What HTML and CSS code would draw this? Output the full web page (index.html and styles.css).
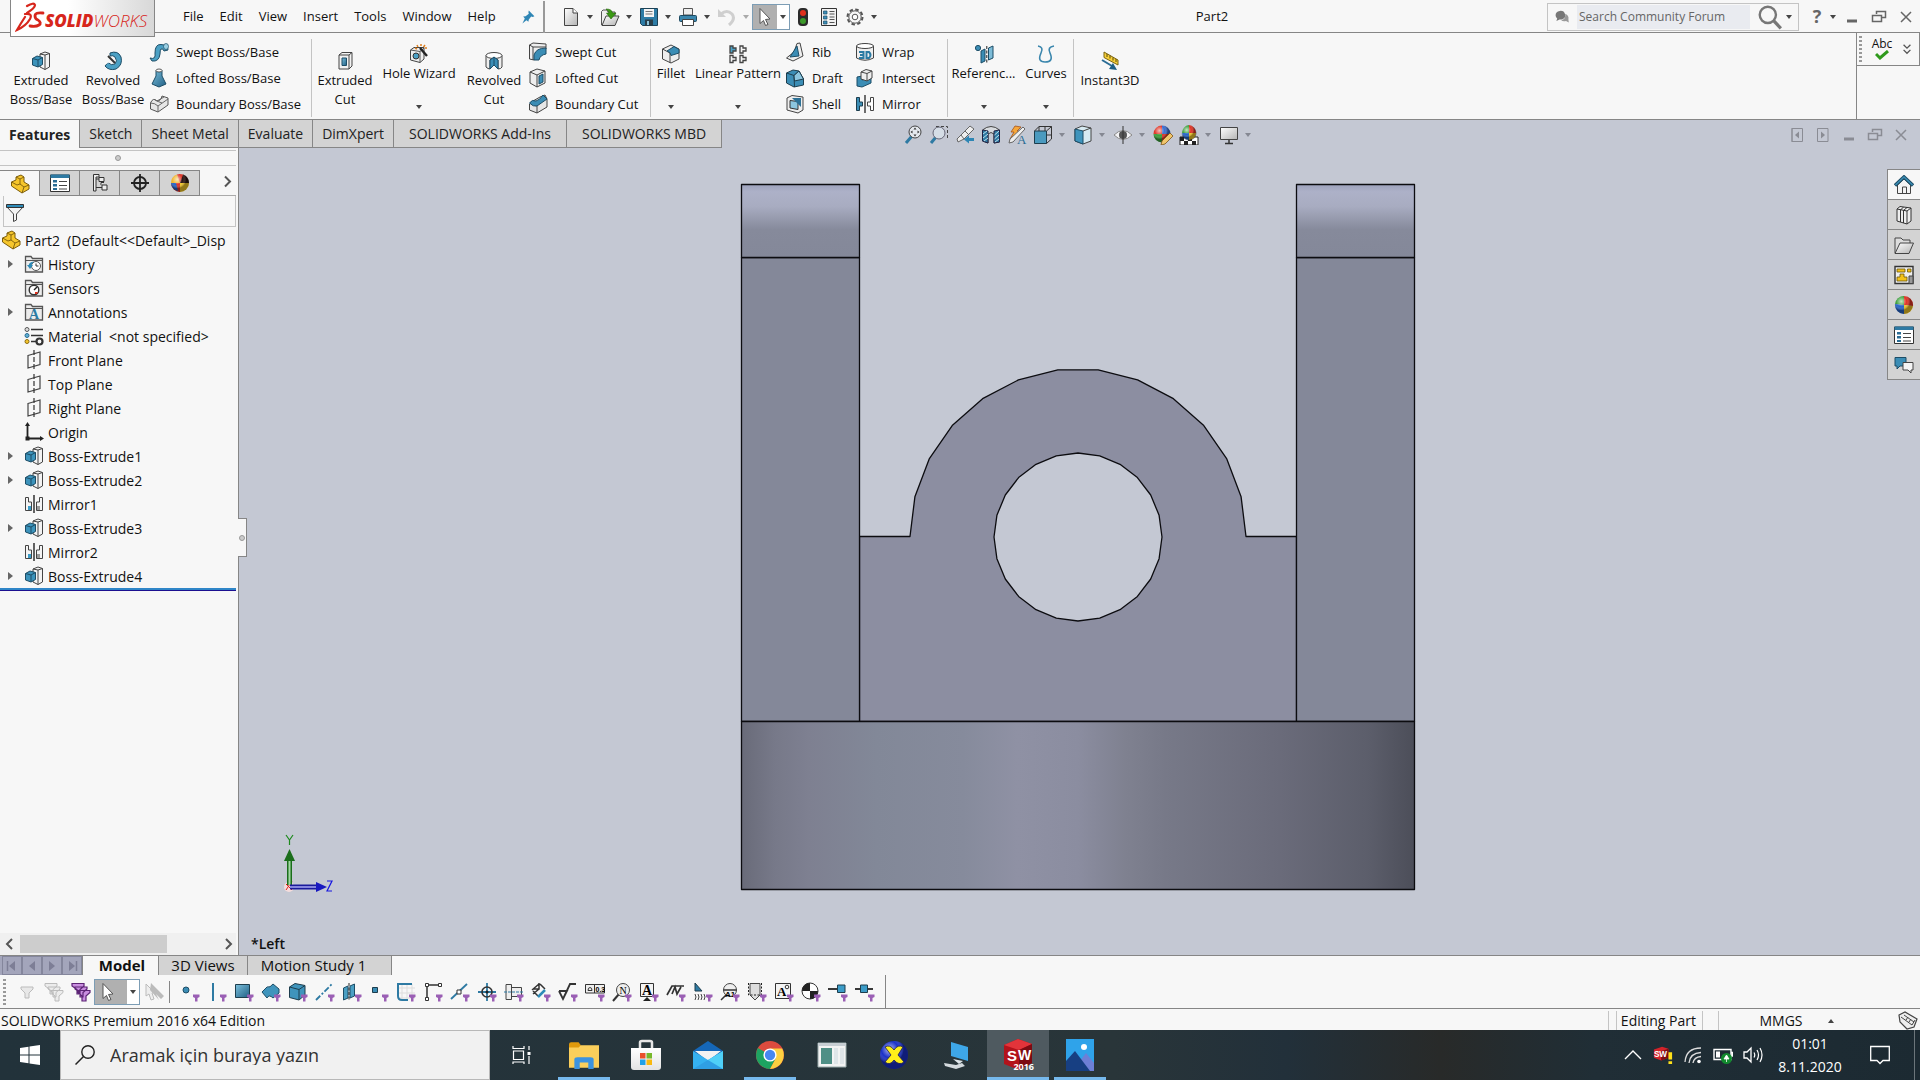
FILE: index.html
```html
<!DOCTYPE html>
<html lang="en">
<head>
  <meta charset="UTF-8">
  <meta name="viewport" content="width=device-width, initial-scale=1.0">
  <title>Part2 - SOLIDWORKS Premium 2016</title>
  <link rel="stylesheet" href="styles.css">
</head>
<body>

  <!-- shared gradients -->
  <svg class="gradients" aria-hidden="true">
    <defs>
      <linearGradient id="gBlue" x1="0" y1="0" x2="1" y2="1"><stop offset="0" stop-color="#7cc0dc"/><stop offset="1" stop-color="#1f5f85"/></linearGradient>
      <linearGradient id="gGrey" x1="0" y1="0" x2="1" y2="1"><stop offset="0" stop-color="#ffffff"/><stop offset="1" stop-color="#b4b4b4"/></linearGradient>
      <linearGradient id="gBase"><stop offset="0" stop-color="#696b79"/><stop offset=".05" stop-color="#777989"/><stop offset=".1" stop-color="#7e8091"/><stop offset=".2" stop-color="#828898"/><stop offset=".33" stop-color="#868b9c"/><stop offset=".41" stop-color="#8f91a4"/><stop offset=".5" stop-color="#8b8da0"/><stop offset=".57" stop-color="#7f8190"/><stop offset=".63" stop-color="#777988"/><stop offset=".8" stop-color="#6a6b7a"/><stop offset=".93" stop-color="#5c5e6b"/><stop offset="1" stop-color="#4c4e59"/></linearGradient>
      <linearGradient id="gRound" x1="0" y1="0" x2="0" y2="1"><stop offset="0" stop-color="#9da2bc"/><stop offset=".1" stop-color="#adb1c8"/><stop offset=".3" stop-color="#a8acc1"/><stop offset=".62" stop-color="#868a9b"/><stop offset="1" stop-color="#848899"/></linearGradient>
      <linearGradient id="gStore" x1="0" y1="0" x2="0" y2="1"><stop offset="0" stop-color="#ffffff"/><stop offset="1" stop-color="#e3e3e3"/></linearGradient>
      <radialGradient id="gBall" cx=".35" cy=".3"><stop offset="0" stop-color="#fff" stop-opacity=".7"/><stop offset=".6" stop-color="#fff" stop-opacity="0"/><stop offset="1" stop-color="#000" stop-opacity=".4"/></radialGradient>
    </defs>
  </svg>

  <!-- icon sprite -->
  <svg class="sprite" aria-hidden="true">
    <symbol id="i-ds" viewBox="0 0 30 34">
      <g fill="none" stroke="#d7261c" stroke-width="2.2" stroke-linecap="round">
        <path d="M12 5Q19 1 20 4Q20 7 12 12M10 13Q18 12 15 18Q11 25 2 29Q6 22 10 16"/>
        <path d="M28 12Q20 11 20 15Q20 18 23 19Q27 22 24 24Q21 26 15 25" stroke-width="2.8"/>
      </g>
    </symbol>
    <symbol id="i-pin" viewBox="0 0 20 20"><path d="M11 2L18 9L16 10L14 9.500L11 13L10.500 16L8 14L3 18L6 12L4 9.500L7 9L11 6L10.500 4Z" fill="#2f86b5"/></symbol>

    <!-- quick access -->
    <symbol id="i-new" viewBox="0 0 20 20"><path d="M3.500 1.500H12L16.500 6V18.500H3.500Z" fill="url(#gGrey)" stroke="#444"/><path d="M12 1.500V6H16.500" fill="#fff" stroke="#444"/></symbol>
    <symbol id="i-open" viewBox="0 0 20 20"><path d="M1.500 18V4.500L3 3H7L8 5H15V9" fill="#eee" stroke="#555"/><path d="M2 18.500L6 9H19L15 18.500Z" fill="url(#gGrey)" stroke="#444"/><path d="M6 2Q12 2 12.500 6H16L11 12L6.500 6H9Q9 4 6 2Z" fill="#3b9a14" stroke="#226608" stroke-width=".6"/></symbol>
    <symbol id="i-save" viewBox="0 0 20 20"><path d="M1.500 1.500H18.500V18.500H3.500L1.500 16.500Z" fill="#2d7ca6" stroke="#1c4257"/><path d="M5 2H15V10H5Z" fill="#f4f4f4"/><path d="M6.500 4.500H13.500M6.500 7H13.500" stroke="#777"/><path d="M6 12.500H14V18.500H6Z" fill="#2a3e49"/><path d="M8 14H10V18H8Z" fill="#8fc5dd"/></symbol>
    <symbol id="i-print" viewBox="0 0 20 20"><path d="M5.500 1.500H14.500V8H5.500Z" fill="#eee" stroke="#555"/><rect x="1.500" y="8.500" width="17" height="6" rx="1" fill="#3a86ad" stroke="#1f4a61"/><path d="M4.500 12.500H15.500V18.500H4.500Z" fill="#fff" stroke="#444"/></symbol>
    <symbol id="i-undo" viewBox="0 0 20 20"><path d="M1 2V10H9Z" fill="#cfcfcf"/><path d="M4 7Q10 2 15 7Q19 12 12 18" fill="none" stroke="#cfcfcf" stroke-width="3"/></symbol>
    <symbol id="i-cursor" viewBox="0 0 20 20"><path d="M5 1.500L15 12L10.500 12.500L13 17.500L10.500 18.500L8.500 13.500L5 16.500Z" fill="#fff" stroke="#555"/></symbol>
    <symbol id="i-light" viewBox="0 0 20 20"><rect x="5" y="1" width="10" height="18" rx="4" fill="#2b2b2b"/><circle cx="10" cy="6" r="3" fill="#e0301c"/><circle cx="10" cy="14" r="3" fill="#3c9a2a"/></symbol>
    <symbol id="i-options" viewBox="0 0 20 20"><path d="M2.500 1.500H17.500V18.500H2.500Z" fill="#f2f2f2" stroke="#333"/><path d="M4.500 4H8V7H4.500ZM4.500 9H8V12H4.500ZM4.500 14H8V17H4.500Z" fill="#3d8fb9" stroke="#1c4d68" stroke-width=".7"/><path d="M10.500 4.500H15.500M10.500 7H15.500M10.500 10H15.500M10.500 12.500H15.500M10.500 15.500H15.500" stroke="#555"/></symbol>
    <symbol id="i-gear" viewBox="0 0 20 20"><circle cx="10" cy="10" r="7.500" fill="none" stroke="#555" stroke-width="2" stroke-dasharray="3.500 2.390"/><circle cx="10" cy="10" r="6.200" fill="#f7f7f7" stroke="#555"/><circle cx="10" cy="10" r="2.800" fill="#fff" stroke="#555"/></symbol>
    <symbol id="i-chat" viewBox="0 0 20 20"><path d="M2 8a6 5.500 0 1 1 8 5L7 13L3 15L4 12Q2 10 2 8Z" fill="#777"/><path d="M14 6Q19 8 18 13L18.500 17L15 15Q11 16 9 14Q15 13 14 6Z" fill="#999"/></symbol>
    <symbol id="i-mag" viewBox="0 0 24 24"><circle cx="10" cy="10" r="7.500" fill="none" stroke="#777" stroke-width="2.200"/><path d="M15.500 15.500L22 22.500" stroke="#777" stroke-width="3"/></symbol>
    <symbol id="i-min" viewBox="0 0 16 16"><path d="M3 12H13" stroke="currentColor" stroke-width="3"/></symbol>
    <symbol id="i-restore" viewBox="0 0 16 16"><path d="M5.500 5V2.500H14.500V8.500H11M1.500 6.500H10.500V12.500H1.500Z" fill="none" stroke="currentColor" stroke-width="1.500"/></symbol>
    <symbol id="i-close" viewBox="0 0 16 16"><path d="M3 3L13 13M13 3L3 13" stroke="currentColor" stroke-width="1.500"/></symbol>
    <symbol id="i-paneL" viewBox="0 0 16 16"><path d="M3 1.500H13.500V14.500H3ZM3 1V15" fill="none" stroke="#8a8c94"/><path d="M10 4.500V11.500L6 8Z" fill="#8a8c94"/></symbol>
    <symbol id="i-paneR" viewBox="0 0 16 16"><path d="M2.500 1.500H13V14.500H2.500Z" fill="none" stroke="#8a8c94"/><path d="M6 4.500V11.500L10 8Z" fill="#8a8c94"/></symbol>

    <!-- features ribbon -->
    <symbol id="i-extrude" viewBox="0 0 20 20"><path d="M9 3L14 1L18.500 2.500V16L14 18.500L9 16Z" fill="#f3f3f3" stroke="#444"/><path d="M14 4L18.500 2.500M14 4V18.500M9 3L14 4" fill="none" stroke="#444"/><path d="M1.500 7.500L6 5L11.500 6.500V13.500L7 16L1.500 14Z" fill="#3c93bb" stroke="#1d4d66"/><path d="M1.500 7.500L7 9L11.500 6.500M7 9V16" fill="none" stroke="#1d4d66"/></symbol>
    <symbol id="i-revolve" viewBox="0 0 20 20"><path d="M7 2Q15 -1 18 6Q20 14 13 18Q6 20 2 15L5 11.500Q8 15 12 13Q15 10 12 6Q10 4 7 5Z" fill="#4ba0c4" stroke="#1d4d66"/><path d="M5 5L12 12" stroke="#333" stroke-width="2"/><path d="M2 13L6 11" stroke="#fff"/></symbol>
    <symbol id="i-sweep" viewBox="0 0 20 20"><path d="M1 16Q7 18 6 11Q6 2 12 2.500Q19 3 19 8L15 9Q14 6 12 7Q11 8 11 12Q10 20 3 19Z" fill="#4ba0c4" stroke="#1d4d66"/><ellipse cx="17" cy="4.500" rx="2.500" ry="3" fill="#9bd0e4" stroke="#1d4d66" stroke-width=".7"/></symbol>
    <symbol id="i-loft" viewBox="0 0 20 20"><path d="M7 2.500H13V8L17 16L10 19L3 16L7 8Z" fill="url(#gBlue)" stroke="#1d4d66"/><ellipse cx="10" cy="2.500" rx="3" ry="1.500" fill="#fff" stroke="#333" stroke-width=".8"/></symbol>
    <symbol id="i-boundary" viewBox="0 0 20 20"><path d="M1.500 9Q4 3 8 7Q12 7 13 2L19 4V11L9 18L1.500 15Z" fill="#e6e6e6" stroke="#555"/><path d="M1.500 9Q6 9 9 12L19 5M9 12V18M6 6Q10 8 13 9M8 7L15 3" fill="none" stroke="#666"/></symbol>
    <symbol id="i-excut" viewBox="0 0 20 20"><path d="M4 4L7 1.500H17V15L14 18H4Z" fill="#f2f2f2" stroke="#444"/><path d="M4 4H14V18M14 4L17 1.500" fill="none" stroke="#444"/><path d="M7 7H11.500V14.500H7Z" fill="url(#gBlue)" stroke="#1d4d66"/></symbol>
    <symbol id="i-hole" viewBox="0 0 20 20"><path d="M1.500 6L5 3.500H15V15L11 18.500L1.500 16Z" fill="#eee" stroke="#444"/><path d="M1.500 6L11 7.500L15 4M11 7.500V18.500" fill="none" stroke="#555"/><circle cx="7" cy="12" r="3" fill="#4ba0c4" stroke="#333"/><path d="M11 4L18 12" stroke="#222" stroke-width="2.400"/><path d="M8 1L9 3M12 0V2M16 1L14.500 3M18 4H16M6 4L8 5" stroke="#e08020" stroke-width="1.500"/></symbol>
    <symbol id="i-revcut" viewBox="0 0 20 20"><path d="M2 4.500V16Q4 18 6 18V9L10 7L14 9V18Q17 18 18 16V4.500" fill="#eee" stroke="#444"/><ellipse cx="10" cy="4.500" rx="8" ry="3" fill="#fff" stroke="#444"/><path d="M6 18V9L10 6L14 9V18L10 14Z" fill="#3b8db5" stroke="#1d4d66"/><path d="M10 6V14" stroke="#1d4d66"/></symbol>
    <symbol id="i-sweptcut" viewBox="0 0 20 20"><path d="M1.500 3L5 1L18 2V7L6 18L1.500 17Z" fill="#eee" stroke="#444"/><path d="M5 5L1.500 3M5 5L18 5M5 5V18" stroke="#444"/><path d="M6 18V13Q8 6 18 6V12Q12 13 11 18Z" fill="#3b8db5" stroke="#1d4d66"/></symbol>
    <symbol id="i-loftcut" viewBox="0 0 20 20"><path d="M2 4L9 1L17 3V15L9 19L2 15Z" fill="#eee" stroke="#444"/><path d="M2 4L9 7L17 3M9 7V19" fill="none" stroke="#444"/><path d="M11 8L15 6V14L11 16Z" fill="#3b8db5" stroke="#1d4d66"/></symbol>
    <symbol id="i-boundcut" viewBox="0 0 20 20"><path d="M1.500 10L5 7L12 3L17 1L19 5V13L9 19L1.500 16Z" fill="#e6e6e6" stroke="#444"/><path d="M1.500 9Q4 5 8 7Q12 6 15 1L19 5L9 12Q5 13 1.500 9Z" fill="#3b8db5" stroke="#1d4d66"/><path d="M9 12V19" stroke="#444"/></symbol>
    <symbol id="i-fillet" viewBox="0 0 20 20"><path d="M1.500 5L10 1L18 5V15L10 19L1.500 15Z" fill="#eee" stroke="#444"/><path d="M1.500 5L9 9V19" fill="none" stroke="#444"/><path d="M6 7L13 2.500L18 5.500V9L10 11.500Q10 8 6 7Z" fill="#3b8db5" stroke="#1d4d66"/></symbol>
    <symbol id="i-linear" viewBox="0 0 20 20"><g fill="none" stroke="#444" stroke-width="1.300"><path d="M2 2H5V4H8V7H5V9H2Z" fill="#4ba0c4"/><path d="M12 2H15V4H18V7H15V9H12Z"/><path d="M2 11.500H5V13.500H8V16.500H5V18.500H2Z"/><path d="M12 11.500H15V13.500H18V16.500H15V18.500H12Z"/></g></symbol>
    <symbol id="i-rib" viewBox="0 0 20 20"><path d="M12 1.500L15 1L18 14L8 19L1.500 16L9 10Z" fill="#eee" stroke="#444"/><path d="M12 4L14 14L5 15Z" fill="#3b8db5" stroke="#1d4d66"/></symbol>
    <symbol id="i-draft" viewBox="0 0 20 20"><path d="M1.500 5L8 2L14 3L18.500 11V17L9 19L1.500 15Z" fill="#3b8db5" stroke="#1d3d4d"/><path d="M1.500 5L9 7.500L14 3M9 7.500L9.500 19" fill="none" stroke="#1d3d4d"/><path d="M9 7.500L14 3L18.500 11L9.500 13Z" fill="#8cc6df" stroke="#1d3d4d"/></symbol>
    <symbol id="i-shell" viewBox="0 0 20 20"><path d="M2 4L7 1.500L18 3V16L13 19L2 16Z" fill="#eee" stroke="#444"/><path d="M5 6.500L13 7.500V15.500L5 14Z" fill="#8cc6df" stroke="#333"/><path d="M7 4H16V13L11 8Z" fill="#2c7196"/></symbol>
    <symbol id="i-wrap" viewBox="0 0 20 20"><path d="M1.500 4V16Q10 20.500 18.500 16V4" fill="#eee" stroke="#444"/><ellipse cx="10" cy="4" rx="8.500" ry="2.500" fill="#fff" stroke="#444"/><path d="M4 10H8.500V16H4M5 13H8M11.500 10H14Q17 13 14 16H11.500Z" fill="none" stroke="#2a7aa3" stroke-width="2"/></symbol>
    <symbol id="i-intersect" viewBox="0 0 20 20"><path d="M2 9L7 8V12L16 9V15L7 19L2 18Z" fill="#3b8db5" stroke="#1d4d66"/><path d="M6 4L11 1.500L17 3V10L12 13L6 11Z" fill="#eee" stroke="#444"/><path d="M6 4L12 5.500L17 3M12 5.500V13" fill="none" stroke="#444"/></symbol>
    <symbol id="i-mirror" viewBox="0 0 20 20"><path d="M1.500 3.500H4.500V8H7.500V12H4.500V16.500H1.500Z" fill="#3b8db5" stroke="#1d3d4d"/><path d="M10 1V19" stroke="#222" stroke-width="1.300"/><path d="M18.500 3.500H15.500V8H12.500V12H15.500V16.500H18.500Z" fill="#fff" stroke="#444"/></symbol>
    <symbol id="i-refgeo" viewBox="0 0 20 20"><circle cx="4" cy="4" r="2.600" fill="#3b8db5" stroke="#1d4d66"/><path d="M7 7L11 5V17L7 19Z" fill="#3b8db5" stroke="#1d4d66"/><path d="M14.500 4L19 2V14L14.500 16Z" fill="#7dbcd8" stroke="#1d4d66"/><path d="M12.800 2V19" stroke="#222" stroke-dasharray="3 1.500"/></symbol>
    <symbol id="i-curves" viewBox="0 0 20 20"><path d="M2 2Q8 3 5 9Q1 18 9 18Q18 18 14 9Q11 3 18 2" fill="none" stroke="#3a86ad" stroke-width="1.600"/></symbol>
    <symbol id="i-instant" viewBox="0 0 20 20"><path d="M4 1L18 9V14L4 6.500Z" fill="#f7d038" stroke="#7a6412"/><path d="M7 3V6M10 4.500V7.500M13 6.500V9.500M16 8V11" stroke="#5a4808"/><path d="M2 9L12 15" stroke="#2a6c94" stroke-width="2"/><path d="M17 19L9 18L13 12Z" fill="#1f5f85"/></symbol>

    <!-- view toolbar -->
    <symbol id="i-zoomfit" viewBox="0 0 20 20"><path d="M9 11L3 18" stroke="#2e7aa3" stroke-width="3"/><circle cx="12" cy="7" r="6" fill="#e4e8ee" stroke="#444"/><path d="M12 2.500L13.500 4.500H10.500ZM12 11.500L13.500 9.500H10.500ZM7.500 7L9.500 5.500V8.500ZM16.500 7L14.500 5.500V8.500Z" fill="#333"/></symbol>
    <symbol id="i-zoomarea" viewBox="0 0 20 20"><path d="M7 1.500H18.500V13" fill="none" stroke="#444" stroke-dasharray="3 2"/><path d="M7 12L2 18" stroke="#2e7aa3" stroke-width="3"/><circle cx="10" cy="8" r="6" fill="#d5dde6" stroke="#667"/></symbol>
    <symbol id="i-prev" viewBox="0 0 20 20"><path d="M15 1L19 4L9 14L3 17L2 14L8 8Z" fill="#eee" stroke="#666"/><path d="M10 6L14 10M6 10L9 14" stroke="#666"/><path d="M19 13V16H14V18.500L9 14.500L14 10.500V13Z" fill="#2e86b4"/></symbol>
    <symbol id="i-section" viewBox="0 0 20 20"><path d="M1.500 5Q10 -2 18.500 5V17L13 18V9Q10 6 7 9V18L1.500 16Z" fill="#d7dade" stroke="#444"/><path d="M1.500 5L7 6V18L1.500 16ZM13 6L18.500 5V17L13 18Z" fill="#2e7aa3" stroke="#224"/><path d="M2 9L6 6M2 13L7 9M3 16L7 13M13.500 10L18 6M13.500 14L18 10M14 17L18 14" stroke="#bfe0ee"/></symbol>
    <symbol id="i-dynann" viewBox="0 0 20 20"><path d="M8 1L14 2L10 6H14L3 14L7 7H4Z" fill="#f6a73a" stroke="#a5521a" stroke-width=".8"/><path d="M16 2L18 4L6 17L2 18L3 14Z" fill="#eee" stroke="#666"/><text x="10" y="19" font-family="Liberation Serif" font-size="13" fill="#2a6c94">A</text></symbol>
    <symbol id="i-orient" viewBox="0 0 20 20"><path d="M1.500 6H13.500V18.500H1.500Z" fill="#4a9abf" stroke="#1d3d4d"/><path d="M1.500 6L6 1.500H18.500V14L13.500 18.500M13.500 6L18.500 1.500M6 1.500V6M12 1.500V6M13.500 10H18.500" fill="none" stroke="#333"/></symbol>
    <symbol id="i-style" viewBox="0 0 20 20"><path d="M2 4L9 1L18 3V16L10 19L2 16Z" fill="#d6eaf2" stroke="#444"/><path d="M2 4L10 6V19L2 16Z" fill="#3f94bc" stroke="#1d4d66"/><path d="M10 6L18 3" stroke="#444"/></symbol>
    <symbol id="i-eye" viewBox="0 0 20 20"><path d="M1 10Q10 1 19 10Q10 19 1 10Z" fill="#f2f2f4" stroke="#888"/><circle cx="10" cy="10" r="4" fill="#555"/><path d="M10 1V19" stroke="#333"/></symbol>
    <symbol id="i-ball" viewBox="0 0 20 20"><path d="M10 10V1A9 9 0 0 0 1 9Z" fill="#3ba03a"/><path d="M10 10V1A9 9 0 0 1 19 11Z" fill="#e03426"/><path d="M10 10L1 9A9 9 0 0 0 10 19Z" fill="#2765c8"/><path d="M10 10L19 11A9 9 0 0 1 10 19Z" fill="#f0c528"/><circle cx="10" cy="10" r="9" fill="url(#gBall)"/></symbol>
    <symbol id="i-appear" viewBox="0 0 20 20"><path d="M9 9V.5A8.500 8.500 0 0 0 .5 9Z" fill="#e03426"/><path d="M9 9V.5A8.500 8.500 0 0 1 17.500 9Z" fill="#3d6fd0"/><path d="M9 9H.5A8.500 8.500 0 0 0 9 17.500Z" fill="#3ba03a"/><path d="M9 9H17.500A8.500 8.500 0 0 1 9 17.500Z" fill="#e03426"/><circle cx="9" cy="9" r="8.500" fill="url(#gBall)"/><path d="M17 8L20 11L12 19L8 20L9 16Z" fill="#f1c66c" stroke="#7a5317" stroke-width=".8"/></symbol>
    <symbol id="i-scene" viewBox="0 0 20 20"><path d="M1 12H19V20H1Z" fill="#fff" stroke="#222"/><path d="M1 12H5V16H1ZM9 12H13V16H9ZM5 16H9V20H5ZM13 16H17V20H13Z" fill="#222"/><path d="M10 8V0A8 8 0 0 0 3 8Z" fill="#3ba03a"/><path d="M10 8V0A8 8 0 0 1 17 8Z" fill="#e03426"/><path d="M3 8H10V15A8 8 0 0 1 3 8Z" fill="#2765c8"/><path d="M10 8H17A8 8 0 0 1 10 15Z" fill="#f0c528"/><circle cx="10" cy="8" r="7.500" fill="url(#gBall)"/></symbol>
    <symbol id="i-monitor" viewBox="0 0 20 20"><path d="M1.500 2.500H18.500V14.500H1.500Z" fill="url(#gGrey)" stroke="#444"/><path d="M10 15V18M6 18.500H14" stroke="#333" stroke-width="1.500"/></symbol>

    <!-- feature tree -->
    <symbol id="i-part" viewBox="0 0 20 20"><path d="M6 3L11 1L14 3V8L19 11V15L12 19L1.500 12V8L6 6Z" fill="#f6c62c" stroke="#7b5c0b"/><path d="M6 3L10 5V10L14 13L19 11M10 5L14 3M14 13L12 19M1.500 8L7 11L10 10" fill="none" stroke="#7b5c0b" stroke-width=".9"/></symbol>
    <symbol id="i-props" viewBox="0 0 20 20"><path d="M.5 2H19.500V18.500H.5Z" fill="#fff" stroke="#333"/><path d="M.5 1.500H19.500V5H.5Z" fill="#2e7aa3"/><path d="M3 7H7V9.500H3ZM3 11H7V13.500H3ZM3 15H7V17H3Z" fill="#2a6c94"/><path d="M9 8.500H17M9 12.500H17M9 16H17" stroke="#444"/></symbol>
    <symbol id="i-config" viewBox="0 0 20 20"><path d="M3.500 1.500H9V4H6V18H3.500Z" fill="#eee" stroke="#333"/><path d="M9 4.500H14V8.500H9ZM12 12H17V17H12ZM6 6H9M6 14.500H12M14 9.500H11V12" fill="#eee" stroke="#333"/></symbol>
    <symbol id="i-target" viewBox="0 0 20 20"><circle cx="10" cy="10" r="6" fill="none" stroke="#222" stroke-width="1.800"/><path d="M10 1V19M1 10H19" stroke="#222" stroke-width="1.800"/></symbol>
    <symbol id="i-display" viewBox="0 0 20 20"><path d="M10 10L7 1.500A9 9 0 0 0 1 10Z" fill="#f0b428"/><path d="M10 10L7 1.500A9 9 0 0 1 14 2Z" fill="#e03426"/><path d="M10 10L13 1.500A9 9 0 0 1 19 10Z" fill="#2b1512"/><path d="M10 10H1A9 9 0 0 0 10 19Z" fill="#e03426"/><path d="M1 10H6L8 18A9 9 0 0 1 1 10Z" fill="#2765c8"/><path d="M10 10H19A9 9 0 0 1 10 19Z" fill="#f0c528"/><circle cx="10" cy="10" r="9" fill="url(#gBall)"/></symbol>
    <symbol id="i-funnel" viewBox="0 0 20 20"><path d="M1.500 3.500H18.500L11.500 11V17L8.500 18.500V11Z" fill="#f4f4f4" stroke="#444"/><path d="M1.500 1.500H18.500V4.500H1.500Z" fill="#2e8bb8" stroke="#333"/></symbol>
    <symbol id="i-folder" viewBox="0 0 20 20"><path d="M1.500 18V2.500H7L8.500 4.500H18.500V18Z" fill="#ececec" stroke="#555" stroke-width="1.300"/><path d="M1.500 6.500H18" stroke="#555"/></symbol>
    <symbol id="i-history" viewBox="0 0 20 20"><use href="#i-folder"/><circle cx="12" cy="12" r="4.500" fill="#fff" stroke="#555"/><path d="M12 9.500V12H14.500" fill="none" stroke="#333"/><path d="M3 11L6 15L9 11H7.500Q8 9 10 7.500Q5 8 4.800 11Z" fill="#2e8bb8"/></symbol>
    <symbol id="i-sensor" viewBox="0 0 20 20"><use href="#i-folder"/><circle cx="10" cy="12" r="4.800" fill="#fff" stroke="#333" stroke-width="1.400"/><path d="M10 12L13 9" stroke="#222" stroke-width="1.500"/><path d="M11 14H14L13 16H11Z" fill="#e0301c"/></symbol>
    <symbol id="i-annot" viewBox="0 0 20 20"><use href="#i-folder"/><text x="10" y="17" text-anchor="middle" font-family="Liberation Serif" font-weight="bold" font-size="14" fill="#2a7aa3">A</text></symbol>
    <symbol id="i-material" viewBox="0 0 20 20"><path d="M7 3.500H19M7 9.500H19M7 15.500H12" stroke="#333" stroke-width="1.600"/><circle cx="3" cy="3.500" r="2" fill="#ddd" stroke="#555"/><circle cx="3" cy="9.500" r="2" fill="#5fb0d4" stroke="#2a6c94"/><circle cx="3" cy="15.500" r="2" fill="#f6c62c" stroke="#8d6d12"/><circle cx="15.500" cy="15.500" r="3" fill="none" stroke="#333" stroke-width="2.200"/></symbol>
    <symbol id="i-plane" viewBox="0 0 20 20"><path d="M4 5.500L16 2V14.500L4 18Z" fill="none" stroke="#444" stroke-width="1.200"/><path d="M10 0V20" stroke="#333" stroke-width="1.200" stroke-dasharray="5 2"/></symbol>
    <symbol id="i-origin" viewBox="0 0 20 20"><path d="M3.500 3V16.500H17" fill="none" stroke="#222" stroke-width="1.800"/><path d="M3.500 0L6 4H1ZM20 16.500L16 14V19ZM1.500 14.500H5.500V18.500H1.500Z" fill="#222"/></symbol>
    <symbol id="i-mirrorf" viewBox="0 0 20 20"><path d="M1.500 3.500H4.500V8H7.500V16.500H1.500Z" fill="#f4f4f4" stroke="#444"/><path d="M4 12H7V16H4Z" fill="#3b9cc8"/><path d="M10 1V19" stroke="#222" stroke-width="1.400"/><path d="M18.500 3.500H15.500V8H12.500V16.500H18.500Z" fill="#f4f4f4" stroke="#444"/><path d="M13 12H16V16H13Z" fill="#999"/></symbol>

    <!-- task pane -->
    <symbol id="i-home" viewBox="0 0 20 20"><path d="M3.500 10V18.500H16.500V10L10 4Z" fill="#f4f4f4" stroke="#444"/><path d="M8.500 18V12H12.500V18" fill="none" stroke="#444"/><path d="M1 10.500L10 2L19 10.500" fill="none" stroke="#1d4d66" stroke-width="3.500"/><path d="M1.500 10L10 2L18.500 10" fill="none" stroke="#3b8db5" stroke-width="1.500"/></symbol>
    <symbol id="i-library" viewBox="0 0 20 20"><path d="M3 4L6 1.500L17 3V16L13 19L3 16Z" fill="#eee" stroke="#333"/><path d="M3 4L13 6L17 3M13 6V19M6.500 5V17M9.500 5.500V18M6.500 5L9.500 2M9.500 5.500L13 2.500" fill="none" stroke="#333"/></symbol>
    <symbol id="i-explorer" viewBox="0 0 20 20"><path d="M1 18V3H7L9 5H16V8" fill="#ddd" stroke="#444"/><path d="M1 18.500L6 8H19.500L15 18.500Z" fill="url(#gGrey)" stroke="#444"/></symbol>
    <symbol id="i-palette" viewBox="0 0 20 20"><path d="M1 1.500H19V18.500H1Z" fill="#eee" stroke="#333" stroke-width="1.400"/><path d="M3 4H11V7H3ZM13.500 4H17V7H13.500ZM6 9H10V12H13V16H3V12H6Z" fill="#f3c218" stroke="#6b5508" stroke-width=".8"/><path d="M15 11H19V18.500H15Z" fill="#999" stroke="#444"/></symbol>
    <symbol id="i-forum" viewBox="0 0 20 20"><path d="M1 2.500H12V11H6L3 14V11H1Z" fill="#3b8db5" stroke="#1d4d66"/><path d="M9 7.500H19V15H17V18L14 15H9Z" fill="#f4f4f4" stroke="#444"/></symbol>

    <!-- selection filters -->
    <symbol id="i-pf" viewBox="0 0 20 20"><path d="M13 12.500H19.500V15L17.500 16V19.500H15V16L13 15Z" fill="#9a5fb4"/></symbol>
    <symbol id="i-f0" viewBox="0 0 20 20"><path d="M4 5H16V7L12 11V16H8V11L4 7Z" fill="#e8e8e8" stroke="#bbb"/></symbol>
    <symbol id="i-f1" viewBox="0 0 20 20"><path d="M1 1.500H13V4L9 7.500V12H6V7.500L1 4ZM4 5H16V7L12 10.500V15H9V10.500L4 7ZM7 8.500H19V10.500L15 14V19H11V14L7 10.500Z" fill="#ececec" stroke="#bbb"/></symbol>
    <symbol id="i-f2" viewBox="0 0 20 20"><path d="M1 1.500H13V4L9 7.500V12H6V7.500L1 4ZM4 5H16V7L12 10.500V15H9V10.500L4 7ZM7 8.500H19V10.500L15 14V19H11V14L7 10.500Z" fill="#c98ee0" stroke="#5c2475" stroke-width="1.200"/></symbol>
    <symbol id="i-f3" viewBox="0 0 20 20"><path d="M2 2L10 10L8 11L10 17L7 18L5 12L2 14Z" fill="#eee" stroke="#bbb"/><path d="M7 1L20 14L17 17L12 12L15 18L6 8Z" fill="#bbb"/></symbol>
    <symbol id="i-vertex" viewBox="0 0 20 20"><circle cx="6" cy="8" r="3" fill="#3b8db5" stroke="#1d4d66"/></symbol>
    <symbol id="i-edge" viewBox="0 0 20 20"><path d="M6 1V19" stroke="#2e7aa3" stroke-width="2"/></symbol>
    <symbol id="i-face" viewBox="0 0 20 20"><path d="M1.500 2.500H15.500V15.500H1.500Z" fill="url(#gBlue)" stroke="#1d3d4d"/></symbol>
    <symbol id="i-surf" viewBox="0 0 20 20"><path d="M1 10L6 5Q9 6 12 2L18 7V11L12 16Q8 12 6 16Z" fill="#3f94bc" stroke="#1d4d66"/></symbol>
    <symbol id="i-solid" viewBox="0 0 20 20"><path d="M1.500 5L7 1.500L17 3.500V13L11 18L1.500 15.500Z" fill="#3f94bc" stroke="#1d3d4d"/><path d="M1.500 5L11 7.500L17 3.500M11 7.500V18" fill="none" stroke="#1d3d4d"/></symbol>
    <symbol id="i-axis" viewBox="0 0 20 20"><path d="M1 18L17 2" stroke="#2e7aa3" stroke-width="1.800" stroke-dasharray="6 2 2 2"/></symbol>
    <symbol id="i-fplane" viewBox="0 0 20 20"><path d="M1.500 6L6 4V16L1.500 18ZM8 4L12.500 2V14L8 16Z" fill="#4ba0c4" stroke="#1d4d66"/><path d="M7 1V19" stroke="#222" stroke-dasharray="3 1.500"/></symbol>
    <symbol id="i-fpoint" viewBox="0 0 20 20"><path d="M3.500 5.500H8.500V10.500H3.500Z" fill="#3b8db5" stroke="#1d3d4d"/></symbol>
    <symbol id="i-fsketch" viewBox="0 0 20 20"><path d="M6 2V18M11 2V18M16 2V18M1 6H19M1 11H19M1 16H19" stroke="#ddd"/><path d="M16 2H2V14Q2 18 6 18H12" fill="none" stroke="#2e7aa3" stroke-width="2"/></symbol>
    <symbol id="i-fseg" viewBox="0 0 20 20"><path d="M4 18V3H17" fill="none" stroke="#333" stroke-width="1.500"/><path d="M2.500 1.500H5.500V4.500H2.500ZM15.500 1.500H18.500V4.500H15.500ZM2.500 15.500H5.500V18.500H2.500Z" fill="#fff" stroke="#333"/></symbol>
    <symbol id="i-fmid" viewBox="0 0 20 20"><path d="M1 17L17 2" stroke="#2e7aa3" stroke-width="1.800"/><path d="M7 8H11V12H7Z" fill="#fff" stroke="#333"/></symbol>
    <symbol id="i-fcenter" viewBox="0 0 20 20"><path d="M10 1V19M1 10H19" stroke="#2e7aa3" stroke-width="1.800"/><circle cx="10" cy="10" r="5" fill="none" stroke="#333" stroke-width="1.600"/><circle cx="10" cy="10" r="1.500" fill="#222"/></symbol>
    <symbol id="i-fcl" viewBox="0 0 20 20"><path d="M2 2.500H7.500V17.500H2ZM7.500 5.500H17.500V14.500H7.500Z" fill="#eee" stroke="#444"/><path d="M0 10H19" stroke="#2e7aa3" stroke-dasharray="3 1"/></symbol>
    <symbol id="i-fdim" viewBox="0 0 20 20"><path d="M8 1V7H2M8 7L2 12M1 8L8 2M9 2L14 7M2 9L7 14" fill="none" stroke="#333" stroke-width="1.500"/><path d="M7 15L14 8" stroke="#2e8bb8" stroke-width="2.500"/></symbol>
    <symbol id="i-fsurf" viewBox="0 0 20 20"><path d="M1 9H9L5 17L1 9M5 17L12 2H18" fill="none" stroke="#333" stroke-width="1.800"/></symbol>
    <symbol id="i-fgtol" viewBox="0 0 20 20"><path d="M.5 2.500H19.500V11H.5ZM9.500 2.500V11" fill="#eee" stroke="#333"/><path d="M3 8.500A2 3 0 0 1 7 8.500Z" fill="none" stroke="#333"/><text x="10.500" y="10" font-family="Liberation Sans" font-size="7" font-weight="bold">0.3</text></symbol>
    <symbol id="i-fnote" viewBox="0 0 20 20"><path d="M7 12L1 19" stroke="#333" stroke-width="2"/><circle cx="11" cy="8" r="6.500" fill="#eee" stroke="#444"/><text x="11" y="12" text-anchor="middle" font-family="Liberation Serif" font-size="10">N</text></symbol>
    <symbol id="i-fdatum" viewBox="0 0 20 20"><path d="M1.500 1.500H14.500V14.500H1.500Z" fill="#f4f4f4" stroke="#333"/><path d="M8 15L12 19H4Z" fill="#222"/><text x="8" y="13" text-anchor="middle" font-family="Liberation Serif" font-weight="bold" font-size="14">A</text></symbol>
    <symbol id="i-fweld" viewBox="0 0 20 20"><path d="M1 13L6 4H18M6 12L9 5L11 12L15 5" fill="none" stroke="#333" stroke-width="1.700"/></symbol>
    <symbol id="i-fcat" viewBox="0 0 20 20"><path d="M2 1L9 9H2Z" fill="#2e7aa3" stroke="#1d3d4d"/><path d="M2 12Q4 15 2 18M5 12Q7 15 5 18M8 12Q10 15 8 18M11 12Q13 15 11 18" fill="none" stroke="#444"/></symbol>
    <symbol id="i-fdt" viewBox="0 0 20 20"><circle cx="10" cy="8" r="6.500" fill="#eee" stroke="#444"/><path d="M3.500 8H16.500M6 13L1 18" stroke="#333" stroke-width="1.500"/><text x="10" y="15" text-anchor="middle" font-family="Liberation Sans" font-weight="bold" font-size="8">A1</text></symbol>
    <symbol id="i-fthread" viewBox="0 0 20 20"><path d="M3 1.500H13V13L8 18L3 13Z" fill="#ddd" stroke="#444"/><path d="M1.500 1V13H14.500V1" fill="none" stroke="#222" stroke-dasharray="2 1.500"/></symbol>
    <symbol id="i-fblock" viewBox="0 0 20 20"><path d="M1.500 1.500H16.500V16.500H1.500Z" fill="#f4f4f4" stroke="#333"/><text x="3" y="14" font-family="Liberation Serif" font-weight="bold" font-size="13">A</text><circle cx="13" cy="5" r="1.800" fill="none" stroke="#333"/></symbol>
    <symbol id="i-fcom" viewBox="0 0 20 20"><circle cx="9" cy="9" r="8" fill="#fff" stroke="#333"/><path d="M9 9V1A8 8 0 0 0 1 9ZM9 9V17A8 8 0 0 0 17 9Z" fill="#222"/></symbol>
    <symbol id="i-fconn" viewBox="0 0 20 20"><path d="M0 7H10" stroke="#222" stroke-width="1.800"/><path d="M9.500 3H17V10.500H9.500Z" fill="#3b9cc8" stroke="#1d3d4d"/></symbol>
    <symbol id="i-froute" viewBox="0 0 20 20"><path d="M0 7H18" stroke="#222" stroke-width="1.800"/><path d="M5.500 3H12.500V10.500H5.500Z" fill="#3b9cc8" stroke="#1d3d4d"/></symbol>
    <symbol id="i-tags" viewBox="0 0 20 20"><path d="M1 4L7 1L19 8L16 16L9 18L2 11Z" fill="#eee" stroke="#444" stroke-width="1.200"/><path d="M3 6L14 14L17 9M6 4L16 11M8 9L10 6M11 11L13 8" fill="none" stroke="#444"/></symbol>

    <!-- taskbar -->
    <symbol id="t-win" viewBox="0 0 20 20"><path d="M0 3L8.500 1.800V9.500H0ZM9.500 1.600L20 0V9.500H9.500ZM0 10.500H8.500V18.200L0 17ZM9.500 10.500H20V20L9.500 18.400Z" fill="#fff"/></symbol>
    <symbol id="t-search" viewBox="0 0 20 20"><circle cx="13" cy="7" r="6.200" fill="none" stroke="#222" stroke-width="1.400"/><path d="M8.500 11.500L.5 19.500" stroke="#222" stroke-width="1.500"/></symbol>
    <symbol id="t-view" viewBox="0 0 20 20"><path d="M1 1V3.500H12V1M1.500 6H11.500V14.500H1.500ZM1 19V17H12V19M17 1V5M17 11V19" fill="none" stroke="#fff" stroke-width="1.200"/><path d="M15.500 7H18.500V10H15.500Z" fill="#fff"/></symbol>
    <symbol id="t-folder" viewBox="0 0 28 28"><path d="M0 4Q0 2 2 2H9L11 5V12H0Z" fill="#e09a0c"/><path d="M0 7H9L11 5H28V26H0Z" fill="#fbcf5b"/><path d="M5 27V18Q5 16 8 16H20Q23 16 23 18V27H18V21H10V27Z" fill="#3c93e0"/></symbol>
    <symbol id="t-store" viewBox="0 0 30 30"><path d="M9 9V2.500Q9 1 11 1H19Q21 1 21 2.500V9" fill="none" stroke="#e6e6e6" stroke-width="2.500"/><path d="M0 8H30V27Q30 30 27 30H3Q0 30 0 27Z" fill="url(#gStore)"/><path d="M9 13H14.500V18.500H9Z" fill="#e9502b"/><path d="M15.500 13H21V18.500H15.500Z" fill="#76b82a"/><path d="M9 19.500H14.500V25H9Z" fill="#1fa1e8"/><path d="M15.500 19.500H21V25H15.500Z" fill="#f9b90e"/></symbol>
    <symbol id="t-mail" viewBox="0 0 30 30"><path d="M0 11L15 1L30 11L15 22Z" fill="#1567b8"/><path d="M2 11H28L15 21Z" fill="#f2f2f2"/><path d="M0 11L30 29H0Z" fill="#35b1f0"/><path d="M30 11V29H0Z" fill="#2f9fe4"/><path d="M30 11L15 20L30 29Z" fill="#4fd0f7"/></symbol>
    <symbol id="t-chrome" viewBox="0 0 30 30"><circle cx="15" cy="15" r="14" fill="#dd4b3e"/><path d="M2.900 8A14 14 0 0 0 15 29L21 18L15 15Z" fill="#1da361"/><path d="M15 29A14 14 0 0 0 27.200 8.500H15L21 18Z" fill="#fdd040"/><circle cx="15" cy="15" r="6.600" fill="#fff"/><circle cx="15" cy="15" r="5.200" fill="#4787f0"/></symbol>
    <symbol id="t-app" viewBox="0 0 30 30"><path d="M1 3H29V27H1Z" fill="#f3f3f3" stroke="#9aa"/><path d="M1 3H29V6H1Z" fill="#c7ced3"/><path d="M4 8H15V24H4Z" fill="#4f8f86"/><path d="M17 8H21V24H17ZM23 8H27V24H23Z" fill="#dfe5e8"/></symbol>
    <symbol id="t-x" viewBox="0 0 30 30"><circle cx="15" cy="15" r="14" fill="#1a30c8"/><circle cx="15" cy="15" r="14" fill="url(#gBall)"/><path d="M6 7Q11 4 15 10Q19 4 24 7L19 15L25 22Q20 26 15 20Q11 26 6 22L12 15Z" fill="#ffef1a" stroke="#1a1a50" stroke-width=".8"/></symbol>
    <symbol id="t-pc" viewBox="0 0 30 30"><path d="M10 2L27 7V21L10 16Z" fill="#3ea7e8"/><path d="M12 19L22 21L18 24Z" fill="#dfe6ea"/><path d="M3 23L15 25L21 23L24 26L15 29L4 26Z" fill="#d4dade"/></symbol>
    <symbol id="t-sw" viewBox="0 0 30 32"><path d="M1 6L15 0L29 5V24L16 31L1 25Z" fill="#b3131b"/><path d="M1 6L15 0L29 5L16 11Z" fill="#e3343a"/><path d="M16 11L29 5V24L16 31Z" fill="#7c0b12"/><text x="4" y="22" font-family="Liberation Sans" font-weight="bold" font-size="15" fill="#fff">S</text><text x="15" y="21" font-family="Liberation Sans" font-weight="bold" font-size="14" fill="#fff">W</text></symbol>
    <symbol id="t-photo" viewBox="0 0 28 32"><path d="M0 0H28V32H0Z" fill="#2fa3ea"/><path d="M14 22L20 14L28 24V32H14Z" fill="#6d7fd6"/><path d="M0 22L9 12L24 32H0Z" fill="#173f82"/><circle cx="18" cy="8" r="3" fill="#fff"/></symbol>
    <symbol id="t-up" viewBox="0 0 20 20"><path d="M2 14L10 6L18 14" fill="none" stroke="#fff" stroke-width="1.400"/></symbol>
    <symbol id="t-swtray" viewBox="0 0 22 20"><path d="M1 4L10 1L17 3V13L9 16L1 13Z" fill="#d2232a"/><path d="M9 6L17 3V13L9 16Z" fill="#7c0b12"/><text x="1" y="12" font-family="Liberation Sans" font-weight="bold" font-size="9" fill="#fff">SW</text><path d="M17 7H21V15H17ZM17 17H21V20H17Z" fill="#ffe11a"/></symbol>
    <symbol id="t-wifi" viewBox="0 0 20 20"><path d="M2 17Q3 3 18 3M6 18Q7 8 18 7.500M10 18Q11 12 18 11.500" fill="none" stroke="#ddd" stroke-width="1.300"/><circle cx="16" cy="16.500" r="1.800" fill="#fff"/></symbol>
    <symbol id="t-batt" viewBox="0 0 20 20"><path d="M1 4.500H18V14.500H1ZM18 7.500H19.500V11H18" fill="none" stroke="#fff" stroke-width="1.400"/><path d="M3 6.500H7V12.500H3Z" fill="#fff"/><circle cx="13.500" cy="13.500" r="5.500" fill="#128a2e"/><path d="M13.500 10L16 14H11ZM13.500 13V17" fill="#fff" stroke="#fff" stroke-width=".8"/></symbol>
    <symbol id="t-sound" viewBox="0 0 20 20"><path d="M1 7H4L8 3V17L4 13H1Z" fill="none" stroke="#fff" stroke-width="1.300"/><path d="M11 7.500Q12.500 10 11 12.500M14 5Q17 10 14 15M17 3Q21 10 17 17" fill="none" stroke="#fff" stroke-width="1.200"/></symbol>
    <symbol id="t-note" viewBox="0 0 20 20"><path d="M.7 1.500H19.300V15.500H13L10 18.500L7 15.500H.7Z" fill="none" stroke="#fff" stroke-width="1.300"/></symbol>
  </svg>

  <header class="titlebar">
    <div class="logo">
      <svg class="logo-mark"><use href="#i-ds"/></svg>
      <span class="logo-text"><b>SOLID</b>WORKS</span>
    </div>
    <nav class="menu">
      <a href="#">File</a>
      <a href="#">Edit</a>
      <a href="#">View</a>
      <a href="#">Insert</a>
      <a href="#">Tools</a>
      <a href="#">Window</a>
      <a href="#">Help</a>
    </nav>
    <button class="pin" aria-label="Pin menu"><svg class="ico-s"><use href="#i-pin"/></svg></button>
    <div class="quick">
      <button class="qbtn" aria-label="New"><svg class="ico"><use href="#i-new"/></svg><i class="caret"></i></button>
      <button class="qbtn" aria-label="Open"><svg class="ico"><use href="#i-open"/></svg><i class="caret"></i></button>
      <button class="qbtn" aria-label="Save"><svg class="ico"><use href="#i-save"/></svg><i class="caret"></i></button>
      <button class="qbtn" aria-label="Print"><svg class="ico"><use href="#i-print"/></svg><i class="caret"></i></button>
      <button class="qbtn off" aria-label="Undo"><svg class="ico"><use href="#i-undo"/></svg><i class="caret"></i></button>
      <button class="select" aria-label="Select"><span><svg class="ico"><use href="#i-cursor"/></svg></span><i class="caret"></i></button>
      <button class="tool" aria-label="Rebuild"><svg class="ico"><use href="#i-light"/></svg></button>
      <button class="tool" aria-label="File properties"><svg class="ico"><use href="#i-options"/></svg></button>
      <button class="tool" aria-label="Options"><svg class="ico"><use href="#i-gear"/></svg></button>
      <i class="caret"></i>
    </div>
    <div class="doc-title">Part2</div>
    <div class="forum">
      <svg class="ico-s"><use href="#i-chat"/></svg>
      <input type="text" aria-label="Search Community Forum" placeholder="Search Community Forum">
      <button aria-label="Search"><svg class="ico-l"><use href="#i-mag"/></svg><i class="caret"></i></button>
    </div>
    <div class="win">
      <button class="help" aria-label="Help">?<i class="caret"></i></button>
      <button aria-label="Minimize"><svg class="ico-s"><use href="#i-min"/></svg></button>
      <button aria-label="Restore"><svg class="ico-s"><use href="#i-restore"/></svg></button>
      <button aria-label="Close"><svg class="ico-s"><use href="#i-close"/></svg></button>
    </div>
  </header>

  <div class="ribbon-row">
    <div class="ribbon">
      <div class="group boss">
        <button class="big low"><svg class="ico"><use href="#i-extrude"/></svg>Extruded Boss/Base</button>
        <button class="big low"><svg class="ico"><use href="#i-revolve"/></svg>Revolved Boss/Base</button>
        <div class="stack">
          <button><svg class="ico"><use href="#i-sweep"/></svg>Swept Boss/Base</button>
          <button><svg class="ico"><use href="#i-loft"/></svg>Lofted Boss/Base</button>
          <button><svg class="ico"><use href="#i-boundary"/></svg>Boundary Boss/Base</button>
        </div>
      </div>
      <div class="group cut">
        <button class="big low"><svg class="ico"><use href="#i-excut"/></svg>Extruded Cut</button>
        <button class="big"><svg class="ico"><use href="#i-hole"/></svg>Hole Wizard<i class="caret"></i></button>
        <button class="big low"><svg class="ico"><use href="#i-revcut"/></svg>Revolved Cut</button>
        <div class="stack">
          <button><svg class="ico"><use href="#i-sweptcut"/></svg>Swept Cut</button>
          <button><svg class="ico"><use href="#i-loftcut"/></svg>Lofted Cut</button>
          <button><svg class="ico"><use href="#i-boundcut"/></svg>Boundary Cut</button>
        </div>
      </div>
      <div class="group modify">
        <button class="big"><svg class="ico"><use href="#i-fillet"/></svg>Fillet<i class="caret"></i></button>
        <button class="big"><svg class="ico"><use href="#i-linear"/></svg>Linear Pattern<i class="caret"></i></button>
        <div class="stack">
          <button><svg class="ico"><use href="#i-rib"/></svg>Rib</button>
          <button><svg class="ico"><use href="#i-draft"/></svg>Draft</button>
          <button><svg class="ico"><use href="#i-shell"/></svg>Shell</button>
        </div>
        <div class="stack">
          <button><svg class="ico"><use href="#i-wrap"/></svg>Wrap</button>
          <button><svg class="ico"><use href="#i-intersect"/></svg>Intersect</button>
          <button><svg class="ico"><use href="#i-mirror"/></svg>Mirror</button>
        </div>
      </div>
      <div class="group ref">
        <button class="big"><svg class="ico"><use href="#i-refgeo"/></svg>Referenc...<i class="caret"></i></button>
        <button class="big"><svg class="ico"><use href="#i-curves"/></svg>Curves<i class="caret"></i></button>
      </div>
      <div class="group last">
        <button class="big low"><svg class="ico"><use href="#i-instant"/></svg>Instant3D</button>
      </div>
    </div>
    <div class="ribbon-side">
      <div class="spell">
        <i class="grip"></i>
        <button class="abc" aria-label="Spell checker">Abc<svg viewBox="0 0 14 10"><path d="M1 4L5 8L13 1" fill="none" stroke="#2f9a1c" stroke-width="3"/></svg></button>
        <svg class="chev" viewBox="0 0 10 14"><path d="M1 2L5 6L9 2M1 8L5 12L9 8" fill="none" stroke="#555" stroke-width="1.500"/></svg>
      </div>
    </div>
  </div>

  <div class="tab-row">
    <div class="cmd-tabs">
      <button class="on">Features</button>
      <button>Sketch</button>
      <button>Sheet Metal</button>
      <button>Evaluate</button>
      <button>DimXpert</button>
      <button class="wide">SOLIDWORKS Add-Ins</button>
      <button class="wide">SOLIDWORKS MBD</button>
    </div>
    <div class="hud">
      <button aria-label="Zoom to fit"><svg class="ico"><use href="#i-zoomfit"/></svg></button>
      <button aria-label="Zoom to area"><svg class="ico"><use href="#i-zoomarea"/></svg></button>
      <button aria-label="Previous view"><svg class="ico"><use href="#i-prev"/></svg></button>
      <button aria-label="Section view"><svg class="ico"><use href="#i-section"/></svg></button>
      <button aria-label="Dynamic annotation views"><svg class="ico"><use href="#i-dynann"/></svg></button>
      <button aria-label="View orientation"><svg class="ico"><use href="#i-orient"/></svg><i class="caret"></i></button>
      <button aria-label="Display style"><svg class="ico"><use href="#i-style"/></svg><i class="caret"></i></button>
      <button aria-label="Hide/show items"><svg class="ico"><use href="#i-eye"/></svg><i class="caret"></i></button>
      <button aria-label="Edit appearance"><svg class="ico"><use href="#i-appear"/></svg></button>
      <button aria-label="Apply scene"><svg class="ico"><use href="#i-scene"/></svg><i class="caret"></i></button>
      <button aria-label="View settings"><svg class="ico"><use href="#i-monitor"/></svg><i class="caret"></i></button>
    </div>
    <div class="doc-win">
      <button aria-label="Collapse left"><svg class="ico-s"><use href="#i-paneL"/></svg></button>
      <button aria-label="Collapse right"><svg class="ico-s"><use href="#i-paneR"/></svg></button>
      <button aria-label="Minimize"><svg class="ico-s"><use href="#i-min"/></svg></button>
      <button aria-label="Restore"><svg class="ico-s"><use href="#i-restore"/></svg></button>
      <button aria-label="Close"><svg class="ico-s"><use href="#i-close"/></svg></button>
    </div>
  </div>

  <main class="work">
    <aside class="panel">
      <div class="splitter"><i class="dot"></i></div>
      <div class="mgr-tabs">
        <button class="on" aria-label="FeatureManager"><svg class="ico"><use href="#i-part"/></svg></button>
        <button aria-label="PropertyManager"><svg class="ico"><use href="#i-props"/></svg></button>
        <button aria-label="ConfigurationManager"><svg class="ico"><use href="#i-config"/></svg></button>
        <button aria-label="DimXpertManager"><svg class="ico"><use href="#i-target"/></svg></button>
        <button aria-label="DisplayManager"><svg class="ico"><use href="#i-display"/></svg></button>
        <span class="more"><svg viewBox="0 0 8 12"><path d="M1 1L6 6L1 11" fill="none" stroke="#555" stroke-width="2"/></svg></span>
      </div>
      <div class="filter">
        <svg class="ico"><use href="#i-funnel"/></svg>
        <input type="text" aria-label="Filter tree">
      </div>
      <ul class="tree">
        <li class="root"><svg class="ico"><use href="#i-part"/></svg>Part2&nbsp; (Default&lt;&lt;Default&gt;_Disp</li>
        <li class="sub"><svg class="ico"><use href="#i-history"/></svg>History</li>
        <li><svg class="ico"><use href="#i-sensor"/></svg>Sensors</li>
        <li class="sub"><svg class="ico"><use href="#i-annot"/></svg>Annotations</li>
        <li><svg class="ico"><use href="#i-material"/></svg>Material&nbsp; &lt;not specified&gt;</li>
        <li><svg class="ico"><use href="#i-plane"/></svg>Front Plane</li>
        <li><svg class="ico"><use href="#i-plane"/></svg>Top Plane</li>
        <li><svg class="ico"><use href="#i-plane"/></svg>Right Plane</li>
        <li><svg class="ico"><use href="#i-origin"/></svg>Origin</li>
        <li class="sub"><svg class="ico"><use href="#i-extrude"/></svg>Boss-Extrude1</li>
        <li class="sub"><svg class="ico"><use href="#i-extrude"/></svg>Boss-Extrude2</li>
        <li><svg class="ico"><use href="#i-mirrorf"/></svg>Mirror1</li>
        <li class="sub"><svg class="ico"><use href="#i-extrude"/></svg>Boss-Extrude3</li>
        <li><svg class="ico"><use href="#i-mirrorf"/></svg>Mirror2</li>
        <li class="sub"><svg class="ico"><use href="#i-extrude"/></svg>Boss-Extrude4</li>
      </ul>
      <div class="rollback"></div>
      <div class="hscroll">
        <svg viewBox="0 0 8 12"><path d="M7 1L2 6L7 11" fill="none" stroke="#555" stroke-width="2"/></svg>
        <div class="track"><div class="thumb"></div></div>
        <svg viewBox="0 0 8 12"><path d="M1 1L6 6L1 11" fill="none" stroke="#555" stroke-width="2"/></svg>
      </div>
      <div class="flyout"><i class="dot"></i></div>
    </aside>

    <section class="viewport">
      <svg class="model" viewBox="239 148 1681 807">
        <g stroke="#0c0c10" stroke-width="1.300" stroke-linejoin="round">
          <path fill="#8c8ea1" fill-rule="evenodd" d="M859.500 721.500V536.500H910L914.900 496.800L929.200 458.900L952.200 425.600L982.600 398.700L1018.400 379.900L1057.800 369.800H1098.200L1137.600 379.900L1173.400 398.700L1203.800 425.600L1226.800 458.900L1241.100 496.800L1246 536.500H1296.500V721.500Z
            M1162 537L1159.100 515.300L1150.700 495L1137.400 477.600L1120 464.300L1099.700 455.900L1078 453L1056.300 455.900L1036 464.300L1018.600 477.600L1005.300 495L996.900 515.300L994 537L996.900 558.700L1005.300 579L1018.600 596.400L1036 609.700L1056.300 618.100L1078 621L1099.700 618.100L1120 609.700L1137.400 596.400L1150.700 579L1159.100 558.700Z"/>
          <rect x="741.500" y="257.500" width="118" height="464" fill="#848899"/>
          <rect x="741.500" y="184.500" width="118" height="73" fill="url(#gRound)"/>
          <rect x="1296.500" y="257.500" width="118" height="464" fill="#848899"/>
          <rect x="1296.500" y="184.500" width="118" height="73" fill="url(#gRound)"/>
          <rect x="741.500" y="721.500" width="673" height="168" fill="url(#gBase)"/>
        </g>
      </svg>
      <svg class="triad" viewBox="0 0 56 64">
        <circle cx="9" cy="54" r="5" fill="#f5dcdc"/>
        <path d="M6 51L12 57M12 48L6 57" stroke="#e02020"/>
        <path d="M9.500 52V28" stroke="#1b6e1b" stroke-width="5"/><path d="M9.500 52V28" stroke="#a4d8a4" stroke-width="2"/>
        <path d="M9.500 16L15 28H4Z" fill="#1b6e1b"/>
        <path d="M10 54H36" stroke="#1a1a9c" stroke-width="5"/><path d="M10 54H36" stroke="#a9a9f5" stroke-width="1.500"/>
        <path d="M47 54L36 49V59Z" fill="#1818c0"/>
        <path d="M6 2L9.500 7L13 2M9.500 7V12" fill="none" stroke="#1d8a1d" stroke-width="1.200"/>
        <path d="M47 48H52L47 58H52" fill="none" stroke="#1818e0" stroke-width="1.200"/>
      </svg>
      <div class="view-name">*Left</div>
      <nav class="taskpane">
        <button class="on" aria-label="Resources"><svg class="ico"><use href="#i-home"/></svg></button>
        <button aria-label="Design library"><svg class="ico"><use href="#i-library"/></svg></button>
        <button aria-label="File explorer"><svg class="ico"><use href="#i-explorer"/></svg></button>
        <button aria-label="View palette"><svg class="ico"><use href="#i-palette"/></svg></button>
        <button aria-label="Appearances"><svg class="ico"><use href="#i-ball"/></svg></button>
        <button aria-label="Custom properties"><svg class="ico"><use href="#i-props"/></svg></button>
        <button aria-label="Forum"><svg class="ico"><use href="#i-forum"/></svg></button>
      </nav>
    </section>
  </main>

  <div class="model-tabs">
    <div class="steps">
      <button aria-label="First"><svg viewBox="0 0 14 14"><path d="M2.500 2V12" stroke="#7d7e96" stroke-width="1.500"/><path d="M10 2V12L4 7Z" fill="#7d7e96"/></svg></button>
      <button aria-label="Previous"><svg viewBox="0 0 14 14"><path d="M10 2V12L4 7Z" fill="#7d7e96"/></svg></button>
      <button aria-label="Next"><svg viewBox="0 0 14 14"><path d="M4 2V12L10 7Z" fill="#7d7e96"/></svg></button>
      <button aria-label="Last"><svg viewBox="0 0 14 14"><path d="M11.500 2V12" stroke="#7d7e96" stroke-width="1.500"/><path d="M4 2V12L10 7Z" fill="#7d7e96"/></svg></button>
    </div>
    <button class="tab on">Model</button>
    <button class="tab views">3D Views</button>
    <button class="tab motion">Motion Study 1</button>
  </div>

  <div class="filters-row">
    <div class="filters">
      <i class="grip"></i>
      <button aria-label="Filter"><svg class="ico"><use href="#i-f0"/></svg></button>
      <button aria-label="Clear filters"><svg class="ico"><use href="#i-f1"/></svg></button>
      <button aria-label="All filters"><svg class="ico"><use href="#i-f2"/></svg></button>
      <button class="select" aria-label="Select"><span><svg class="ico"><use href="#i-cursor"/></svg></span><i class="caret"></i></button>
      <button aria-label="Select other"><svg class="ico"><use href="#i-f3"/></svg></button>
      <i class="bar"></i>
      <button aria-label="Vertices"><svg class="ico"><use href="#i-vertex"/><use href="#i-pf"/></svg></button>
      <button aria-label="Edges"><svg class="ico"><use href="#i-edge"/><use href="#i-pf"/></svg></button>
      <button aria-label="Faces"><svg class="ico"><use href="#i-face"/><use href="#i-pf"/></svg></button>
      <button aria-label="Surface bodies"><svg class="ico"><use href="#i-surf"/><use href="#i-pf"/></svg></button>
      <button aria-label="Solid bodies"><svg class="ico"><use href="#i-solid"/><use href="#i-pf"/></svg></button>
      <button aria-label="Axes"><svg class="ico"><use href="#i-axis"/><use href="#i-pf"/></svg></button>
      <button aria-label="Planes"><svg class="ico"><use href="#i-fplane"/><use href="#i-pf"/></svg></button>
      <button aria-label="Sketch points"><svg class="ico"><use href="#i-fpoint"/><use href="#i-pf"/></svg></button>
      <button aria-label="Sketches"><svg class="ico"><use href="#i-fsketch"/><use href="#i-pf"/></svg></button>
      <button aria-label="Sketch segments"><svg class="ico"><use href="#i-fseg"/><use href="#i-pf"/></svg></button>
      <button aria-label="Midpoints"><svg class="ico"><use href="#i-fmid"/><use href="#i-pf"/></svg></button>
      <button aria-label="Center marks"><svg class="ico"><use href="#i-fcenter"/><use href="#i-pf"/></svg></button>
      <button aria-label="Centerlines"><svg class="ico"><use href="#i-fcl"/><use href="#i-pf"/></svg></button>
      <button aria-label="Dimensions"><svg class="ico"><use href="#i-fdim"/><use href="#i-pf"/></svg></button>
      <button aria-label="Surface finish"><svg class="ico"><use href="#i-fsurf"/><use href="#i-pf"/></svg></button>
      <button aria-label="Geometric tolerances"><svg class="ico"><use href="#i-fgtol"/><use href="#i-pf"/></svg></button>
      <button aria-label="Notes"><svg class="ico"><use href="#i-fnote"/><use href="#i-pf"/></svg></button>
      <button aria-label="Datums"><svg class="ico"><use href="#i-fdatum"/><use href="#i-pf"/></svg></button>
      <button aria-label="Weld symbols"><svg class="ico"><use href="#i-fweld"/><use href="#i-pf"/></svg></button>
      <button aria-label="Weld beads"><svg class="ico"><use href="#i-fcat"/><use href="#i-pf"/></svg></button>
      <button aria-label="Datum targets"><svg class="ico"><use href="#i-fdt"/><use href="#i-pf"/></svg></button>
      <button aria-label="Cosmetic threads"><svg class="ico"><use href="#i-fthread"/><use href="#i-pf"/></svg></button>
      <button aria-label="Blocks"><svg class="ico"><use href="#i-fblock"/><use href="#i-pf"/></svg></button>
      <button aria-label="Center of mass"><svg class="ico"><use href="#i-fcom"/><use href="#i-pf"/></svg></button>
      <button aria-label="Connection points"><svg class="ico"><use href="#i-fconn"/><use href="#i-pf"/></svg></button>
      <button aria-label="Routing points"><svg class="ico"><use href="#i-froute"/><use href="#i-pf"/></svg></button>
    </div>
  </div>

  <footer class="status">
    <span class="edition">SOLIDWORKS Premium 2016 x64 Edition</span>
    <span class="cell gap"></span>
    <span class="cell">Editing Part</span>
    <span class="cell narrow"></span>
    <button class="cell units">MMGS<i class="caret-up"></i></button>
    <svg class="ico tags"><use href="#i-tags"/></svg>
  </footer>

  <div class="taskbar">
    <button class="start" aria-label="Start"><svg class="ico"><use href="#t-win"/></svg></button>
    <label class="os-search">
      <svg class="ico"><use href="#t-search"/></svg>
      <input type="text" aria-label="Aramak için buraya yazın" placeholder="Aramak için buraya yazın">
    </label>
    <button class="app view" aria-label="Task view"><svg class="ico"><use href="#t-view"/></svg></button>
    <button class="app open" aria-label="File Explorer"><svg class="ico-t"><use href="#t-folder"/></svg></button>
    <button class="app" aria-label="Store"><svg class="ico-t"><use href="#t-store"/></svg></button>
    <button class="app" aria-label="Mail"><svg class="ico-t"><use href="#t-mail"/></svg></button>
    <button class="app open" aria-label="Chrome"><svg class="ico-t"><use href="#t-chrome"/></svg></button>
    <button class="app" aria-label="Viewer"><svg class="ico-t"><use href="#t-app"/></svg></button>
    <button class="app" aria-label="X"><svg class="ico-t"><use href="#t-x"/></svg></button>
    <button class="app" aria-label="Computer"><svg class="ico-t"><use href="#t-pc"/></svg></button>
    <button class="app open active" aria-label="SOLIDWORKS"><svg class="ico-t"><use href="#t-sw"/></svg><span class="year">2016</span></button>
    <button class="app open" aria-label="Photos"><svg class="ico-t"><use href="#t-photo"/></svg></button>
    <div class="tray">
      <button aria-label="Hidden icons"><svg class="ico"><use href="#t-up"/></svg></button>
      <button aria-label="SOLIDWORKS background"><svg class="ico"><use href="#t-swtray"/></svg></button>
      <button aria-label="Network"><svg class="ico"><use href="#t-wifi"/></svg></button>
      <button aria-label="Battery"><svg class="ico"><use href="#t-batt"/></svg></button>
      <button aria-label="Volume"><svg class="ico"><use href="#t-sound"/></svg></button>
      <div class="clock"><span>01:01</span><span>8.11.2020</span></div>
      <button class="note" aria-label="Notifications"><svg class="ico"><use href="#t-note"/></svg></button>
      <i class="peek"></i>
    </div>
  </div>

</body>
</html>
```

FILE: styles.css
```css
* {
  box-sizing: border-box;
}

body {
  margin: 0;
  height: 100vh;
  display: flex;
  flex-direction: column;
  overflow: hidden;
  background: #f7f7f7;
  color: #111;
  font-family: "Open Sans", "Noto Sans", sans-serif;
  font-size: 14px;
  line-height: 19px;
}

button {
  display: flex;
  align-items: center;
  justify-content: center;
  margin: 0;
  padding: 0;
  border: 0;
  background: none;
  color: inherit;
  font: inherit;
}

input {
  min-width: 0;
  padding: 0;
  border: 0;
  outline: 0;
  background: none;
  font: inherit;
}

.gradients {
  position: absolute;
  width: 0;
  height: 0;
}

.sprite {
  display: none;
}

.ico { width: 20px; height: 20px; flex: none; }
.ico-s { width: 16px; height: 16px; flex: none; }
.ico-l { width: 26px; height: 26px; flex: none; }
.ico-t { width: 30px; height: 32px; flex: none; }

.caret {
  flex: none;
  width: 0;
  height: 0;
  border: 3px solid transparent;
  border-top: 4px solid #444;
  border-bottom: 0;
}

.grip {
  width: 3px;
  height: 26px;
  flex: none;
  background: repeating-linear-gradient(#999 0 2px, transparent 2px 4px);
}

/* title bar */
.titlebar {
  position: relative;
  display: flex;
  align-items: center;
  height: 33px;
  flex: none;
  padding-top: 1px;
  border-bottom: 1px solid #868686;
  font-size: 13px;
}

.logo {
  position: absolute;
  left: 10px;
  top: 0;
  z-index: 2;
  display: flex;
  align-items: center;
  width: 145px;
  height: 37px;
  padding-left: 4px;
  border: 1px solid #868686;
  border-top: 0;
  background: linear-gradient(90deg, #fff 40%, #d8d8d8);
}

.logo-mark {
  width: 30px;
  height: 34px;
}

.logo-text {
  padding-top: 4px;
  color: #d7261c;
  font-size: 17px;
  font-style: italic;
  font-weight: 300;
}

.logo-text b {
  font-weight: 800;
}

.menu {
  display: flex;
  gap: 16px;
  width: 317px;
  margin-left: 183px;
}

.menu a {
  color: #111;
  text-decoration: none;
}

.pin {
  width: 43px;
  height: 32px;
  padding-left: 12px;
}

.quick {
  display: flex;
  align-items: center;
  height: 32px;
  padding-left: 12px;
  border-left: 2px solid #999;
}

.qbtn {
  gap: 6px;
  width: 39px;
}

.off .caret {
  border-top-color: #aaa;
}

.select {
  height: 26px;
  border: 1px solid #7c9db5;
  background: #fff;
}

.select span {
  display: flex;
  width: 24px;
  height: 24px;
  align-items: center;
  justify-content: center;
  background: #b0b0b0;
}

.select .caret {
  margin: 0 3px;
}

.tool {
  width: 26px;
}

.quick > .caret {
  margin-left: 3px;
}

.doc-title {
  flex: 1;
  text-align: center;
}

.forum {
  display: flex;
  align-items: center;
  width: 252px;
  height: 28px;
  padding-left: 6px;
  border: 1px solid #c4c4c4;
}

.forum input {
  flex: 1;
  height: 24px;
  margin-left: 7px;
  padding-left: 2px;
  background: #e9ebf0;
  font-size: 12px;
}

.forum input::placeholder {
  color: #666;
  opacity: 1;
}

.forum button {
  gap: 3px;
  width: 48px;
}

.win {
  display: flex;
  align-items: center;
  width: 121px;
  padding-left: 12px;
  color: #666;
}

.win button {
  width: 27px;
}

.win .help {
  gap: 9px;
  font-size: 18px;
  font-weight: 700;
}

/* ribbon */
.ribbon-row {
  display: flex;
  height: 86px;
  flex: none;
}

.ribbon {
  display: flex;
  flex: 1;
  padding-left: 5px;
  border-right: 1px solid #868686;
  font-size: 13px;
}

.group {
  display: grid;
  height: 78px;
  margin-top: 6px;
  border-right: 1px solid #c4c4c4;
}

.boss { grid-template-columns: 72px 72px 162px; }
.cut { grid-template-columns: 66px 82px 68px 122px; }
.modify { grid-template-columns: 40px 94px 70px 92px; }
.ref { grid-template-columns: 71px 54px; }
.last { grid-template-columns: 72px; border: 0; }

.big {
  flex-direction: column;
  justify-content: flex-start;
  padding-top: 5px;
}

.big.low {
  padding-top: 12px;
}

.big .caret {
  margin-top: 22px;
}

.stack {
  display: grid;
  grid-template-rows: 26px 26px 26px;
}

.stack button {
  justify-content: flex-start;
  gap: 7px;
  white-space: nowrap;
}

.ribbon-side {
  width: 63px;
}

.spell {
  display: flex;
  align-items: center;
  height: 33px;
  padding-left: 2px;
  border: 1px solid #868686;
  border-left: 0;
  border-top: 0;
}

.abc {
  flex-direction: column;
  width: 40px;
  font-size: 12px;
  line-height: 12px;
}

.abc svg {
  width: 14px;
  height: 10px;
}

.chev {
  width: 10px;
  height: 12px;
}

/* command tabs and view toolbar */
.tab-row {
  display: flex;
  height: 29px;
  flex: none;
  border-top: 1px solid #868686;
  background: #c4c8d3;
}

.cmd-tabs {
  display: flex;
}

.cmd-tabs button {
  padding: 0 9px;
  border: solid #868686;
  border-width: 0 1px 1px 0;
  background: #d3d3d3;
  color: #222;
}

.cmd-tabs .wide {
  padding-right: 15px;
  padding-left: 15px;
}

.cmd-tabs .on {
  border-bottom: 0;
  background: #f7f7f7;
  font-weight: 700;
}

.hud {
  display: flex;
  flex: 1;
  align-items: center;
  gap: 6px;
  padding: 2px 0 0 181px;
}

.hud button {
  gap: 6px;
}

.hud .caret {
  margin-right: 2px;
  border-top-color: #858892;
}

.doc-win {
  display: flex;
  align-items: center;
  gap: 10px;
  padding: 2px 11px 0 0;
  color: #8a8c94;
}

/* working area */
.work {
  display: flex;
  flex: 1;
  min-height: 0;
}

.panel {
  position: relative;
  display: flex;
  flex-direction: column;
  width: 239px;
  padding-right: 2px;
  border-right: 1px solid #868686;
}

.splitter {
  display: flex;
  align-items: center;
  justify-content: center;
  height: 16px;
  margin: 2px 0 4px;
  border: solid #c4c4c4;
  border-width: 1px 0;
}

.dot {
  width: 6px;
  height: 6px;
  border: 1px solid #999;
  border-radius: 50%;
  background: #ccc;
}

.mgr-tabs {
  display: flex;
  height: 26px;
  border-bottom: 1px solid #aaa;
}

.mgr-tabs button {
  width: 40px;
  height: 26px;
  border: 1px solid #868686;
  border-left: 0;
  background: #d3d3d3;
}

.mgr-tabs .on {
  border-bottom: 0;
  background: #f7f7f7;
}

.more {
  margin: 5px 4px 0 auto;
}

.more svg {
  display: block;
  width: 8px;
  height: 13px;
}

.filter {
  display: flex;
  align-items: center;
  height: 31px;
  margin-left: 3px;
  padding: 3px 0 0 1px;
  border: 1px solid #c4c4c4;
  border-top: 0;
}

.filter input {
  flex: 1;
}

.tree {
  margin: 1px 0 0;
  padding: 0;
  list-style: none;
  overflow: hidden;
}

.tree li {
  position: relative;
  display: flex;
  align-items: center;
  gap: 4px;
  height: 24px;
  padding-left: 24px;
  white-space: nowrap;
}

.tree .root {
  padding-left: 1px;
}

.tree .sub::before {
  content: "";
  position: absolute;
  left: 8px;
  border: 4px solid transparent;
  border-left: 5px solid #666;
  border-right: 0;
}

.rollback {
  height: 3px;
  border-bottom: 1px solid #1c1090;
  background: #2f86c8;
}

.hscroll {
  display: flex;
  align-items: center;
  gap: 7px;
  height: 22px;
  margin-top: auto;
  padding: 0 3px 0 5px;
  background: #f0f0f0;
}

.hscroll svg {
  width: 8px;
  height: 12px;
}

.track {
  flex: 1;
  height: 18px;
}

.thumb {
  width: 74%;
  height: 18px;
  background: #cdcdcd;
}

.flyout {
  position: absolute;
  top: 370px;
  right: -9px;
  z-index: 1;
  display: flex;
  align-items: center;
  justify-content: center;
  width: 9px;
  height: 39px;
  border: 1px solid #868686;
  border-left: 0;
  background: #f7f7f7;
}

.viewport {
  position: relative;
  flex: 1;
  background: #c4c8d3;
}

.model {
  display: block;
  width: 100%;
  height: 100%;
}

.triad {
  position: absolute;
  left: 41px;
  bottom: 58px;
  width: 56px;
  height: 64px;
}

.view-name {
  position: absolute;
  left: 12px;
  bottom: 2px;
  font-weight: 600;
}

.taskpane {
  position: absolute;
  top: 21px;
  right: 0;
  width: 33px;
  border: solid #868686;
  border-width: 1px 0 0 1px;
}

.taskpane button {
  width: 32px;
  height: 30px;
  border-bottom: 1px solid #868686;
  background: #d3d3d3;
}

.taskpane .on {
  background: #f7f7f7;
}

/* bottom tabs */
.model-tabs {
  display: flex;
  height: 20px;
  flex: none;
  border-top: 1px solid #868686;
}

.steps {
  display: flex;
  width: 83px;
  padding-left: 2px;
  border-right: 1px solid #868686;
  background: #a3a5bb;
}

.steps button {
  width: 20px;
  border: 1px solid #84869c;
}

.steps svg {
  width: 14px;
  height: 14px;
}

.tab {
  border-right: 1px solid #868686;
  background: #d3d3d3;
}

.tab.on {
  width: 76px;
  padding-left: 3px;
  background: #f7f7f7;
  font-size: 15px;
  font-weight: 700;
}

.views {
  width: 89px;
}

.motion {
  width: 144px;
  padding-right: 12px;
}

.views,
.motion {
  font-size: 15px;
}

/* selection filter toolbar */
.filters-row {
  height: 34px;
  flex: none;
  border-bottom: 1px solid #868686;
}

.filters {
  display: flex;
  align-items: center;
  width: 886px;
  height: 33px;
  padding: 1px 0 0 3px;
  border-right: 1px solid #868686;
}

.filters button {
  width: 27px;
  flex: none;
}

.filters .grip {
  margin-right: 7px;
}

.filters .select {
  width: 46px;
}

.filters .select span {
  width: 32px;
  padding-right: 6px;
}

.bar {
  width: 1px;
  height: 22px;
  margin: 0 6px 0 2px;
  background: #868686;
}

/* status bar */
.status {
  display: flex;
  align-items: center;
  height: 21px;
  flex: none;
  padding: 2px 0 0 1px;
}

.edition {
  flex: 1;
}

.cell {
  height: 19px;
  padding: 0 6px 0 4px;
  border-left: 1px solid #c4c4c4;
}

.gap {
  width: 8px;
  padding: 0;
}

.narrow {
  width: 16px;
  padding: 0;
}

.units {
  gap: 25px;
  width: 180px;
  padding-right: 28px;
}

.caret-up {
  border: 3px solid transparent;
  border-bottom: 4px solid #444;
  border-top: 0;
}

.tags {
  margin-right: 2px;
}

/* windows taskbar */
.taskbar {
  display: flex;
  height: 50px;
  flex: none;
  background: linear-gradient(90deg, #22323a, #26343a 40%, #293539 58%, #22303a 67%, #282a29 75%, #202e36 83%, #1c2a32);
  color: #fff;
}

.start {
  width: 60px;
}

.os-search {
  display: flex;
  align-items: center;
  gap: 15px;
  width: 430px;
  padding-left: 14px;
  border: 1px solid #b8b8b8;
  background: #f1f1f1;
}

.os-search input {
  flex: 1;
  font-size: 18px;
}

.os-search input::placeholder {
  color: #333;
  opacity: 1;
}

.app {
  position: relative;
  width: 62px;
}

.app.view {
  width: 63px;
}

.open::after {
  content: "";
  position: absolute;
  left: 5px;
  right: 5px;
  bottom: 0;
  height: 3px;
  background: #76b9ed;
}

.active {
  background: #4f5a60;
}

.active::after {
  left: 0;
  right: 0;
}

.year {
  position: absolute;
  right: 15px;
  bottom: 8px;
  font-size: 9px;
  font-weight: 700;
  line-height: 10px;
}

.tray {
  display: flex;
  margin-left: auto;
}

.tray button {
  width: 30px;
}

.clock {
  display: flex;
  flex-direction: column;
  gap: 4px;
  width: 84px;
  padding-top: 4px;
  text-align: center;
}

.tray .note {
  width: 56px;
}

.peek {
  width: 6px;
  margin-left: 6px;
  border-left: 1px solid #6b757a;
}
```
